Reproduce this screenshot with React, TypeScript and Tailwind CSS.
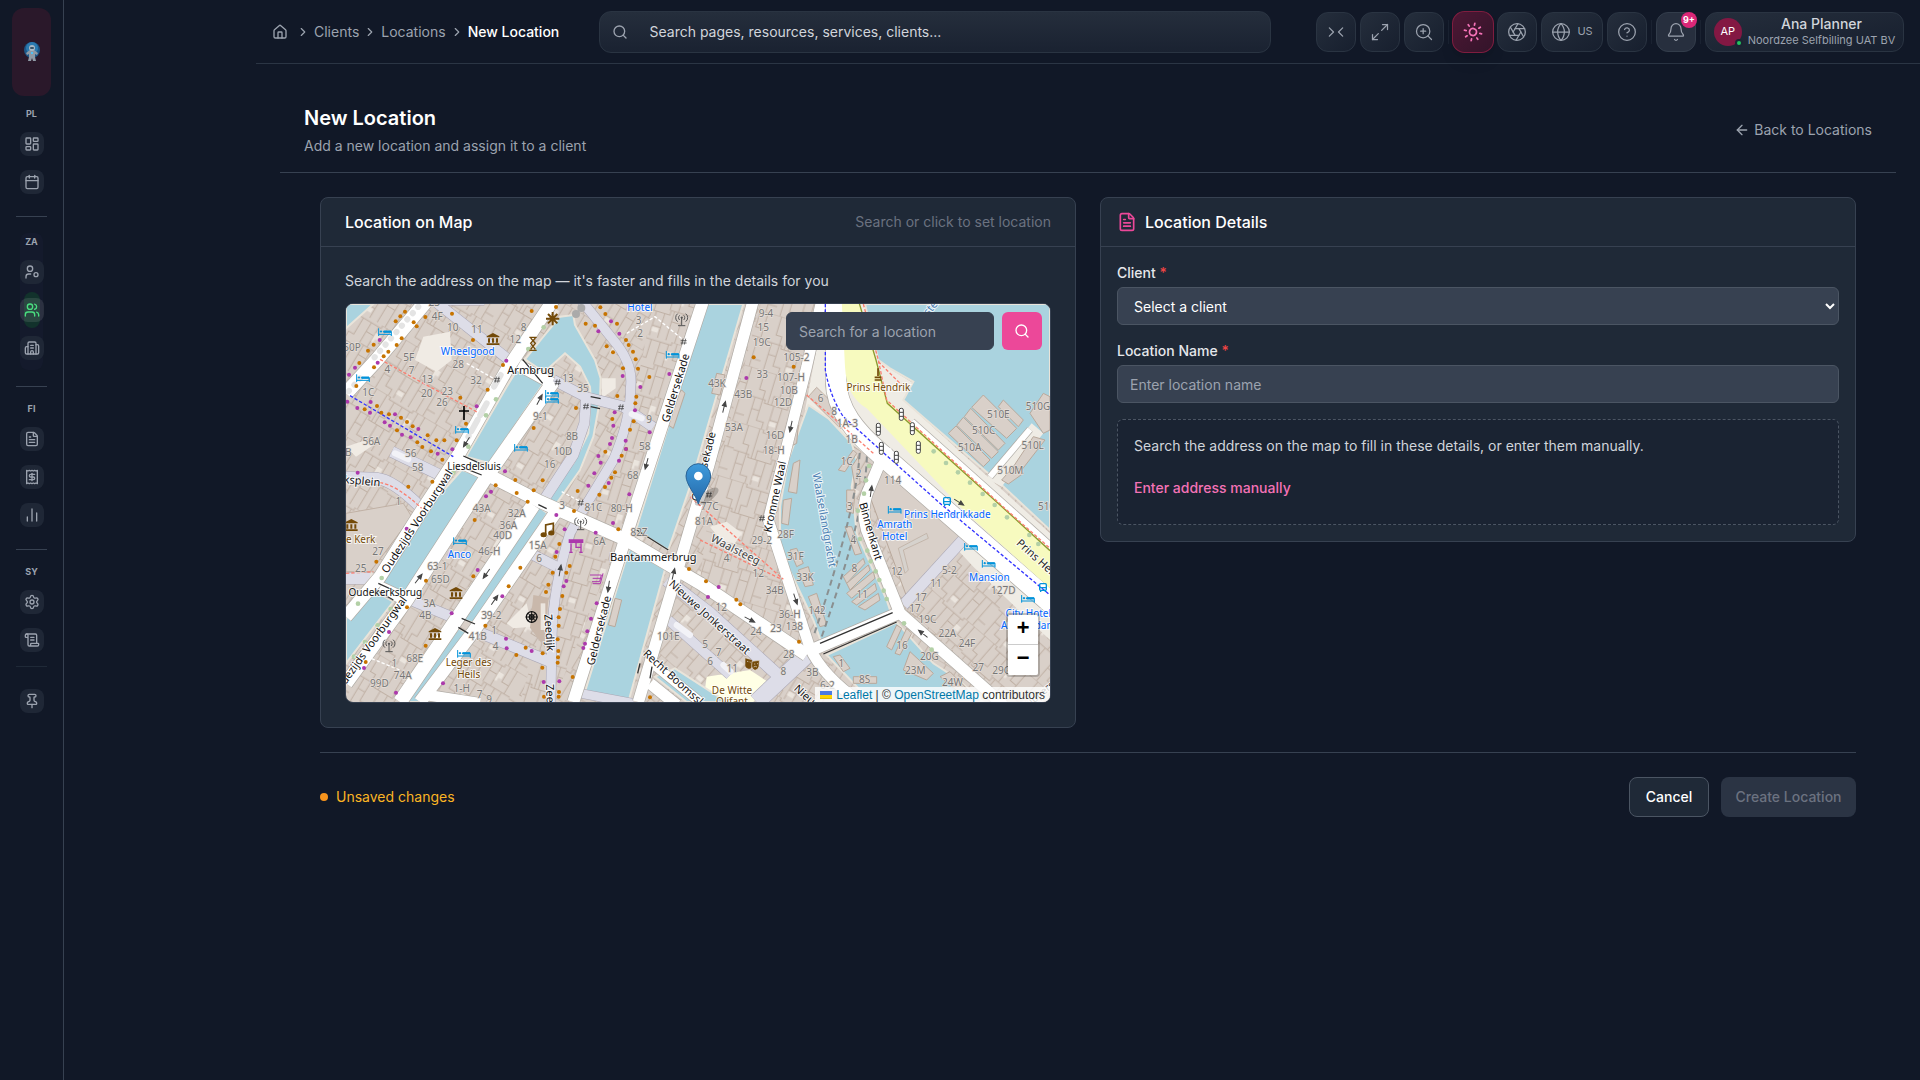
import React from 'react';
import {
  Aperture,
  ArrowLeft,
  Bell,
  Building2,
  Calendar,
  ChartNoAxesColumn,
  ChevronRight,
  ChevronsRightLeft,
  CircleQuestionMark,
  FileText,
  Globe,
  House,
  LayoutDashboard,
  Maximize2,
  Pin,
  ScrollText,
  Search,
  Settings,
  Sun,
  Users,
  ZoomIn,
} from 'lucide-react';

const UserDot = ({ size = 16 }: { size?: number }) => (
  <svg width={size} height={size} viewBox="0 0 24 24" fill="none" stroke="currentColor" strokeWidth="2" strokeLinecap="round" strokeLinejoin="round">
    <circle cx="9" cy="7" r="4" />
    <path d="M10 15H7a4 4 0 0 0-4 4v2" />
    <circle cx="18" cy="16" r="3" />
  </svg>
);

const ReceiptDollar = ({ size = 16 }: { size?: number }) => (
  <svg width={size} height={size} viewBox="0 0 24 24" fill="none" stroke="currentColor" strokeWidth="2" strokeLinecap="round" strokeLinejoin="round">
    <path d="M4 2v20l2-1 2 1 2-1 2 1 2-1 2 1 2-1 2 1V2l-2 1-2-1-2 1-2-1-2 1-2-1-2 1Z" />
    <path d="M16 8h-6a2 2 0 1 0 0 4h4a2 2 0 1 1 0 4H8" />
    <path d="M12 17.5v-11" />
  </svg>
);

const sections = [
  {
    label: 'PL',
    items: [
      { name: 'Dashboard', icon: LayoutDashboard },
      { name: 'Planning', icon: Calendar },
    ],
  },
  {
    label: 'ZA',
    current: true,
    items: [
      { name: 'Employees', icon: UserDot },
      { name: 'Clients', icon: Users, active: true },
      { name: 'Companies', icon: Building2 },
    ],
  },
  {
    label: 'FI',
    items: [
      { name: 'Invoices', icon: FileText },
      { name: 'Billing', icon: ReceiptDollar },
      { name: 'Reports', icon: ChartNoAxesColumn },
    ],
  },
  {
    label: 'SY',
    items: [
      { name: 'Settings', icon: Settings },
      { name: 'Logs', icon: ScrollText },
    ],
  },
];

const Astronaut = () => (
  <svg width="16" height="20" viewBox="0 0 16 20">
    <circle cx="8" cy="8" r="8" fill="#1c5788" />
    <circle cx="8" cy="6" r="6" fill="#2b7ab0" />
    <path d="M6 8 2 11l1 2 2-1v3l-1 4h3l1-3 1 3h3l-1-4v-3l2 1 1-2-4-3Z" fill="#8f9aa6" />
    <circle cx="8" cy="6" r="3" fill="#a9b8c4" />
    <rect x="6" y="5" width="4" height="2" rx="1" fill="#3a5568" />
    <rect x="7" y="10" width="2" height="2" fill="#4fc3f7" />
  </svg>
);

const NavItem = ({ name, icon: Icon, active }: any) => (
  <a href="#" aria-label={name} className={`flex h-9 items-center justify-center rounded-full ${active ? 'w-4 bg-[#12322c]' : 'w-6'}`}>
    <span className={`flex h-6 w-6 shrink-0 items-center justify-center rounded-lg ${active ? 'bg-white/10 text-[#4ade80]' : 'bg-[#1f2736] text-[#9ca3af]'}`}>
      <Icon size={16} />
    </span>
  </a>
);

const Sidebar = () => (
  <aside className="flex w-16 shrink-0 flex-col items-center border-r border-[#374151] pt-2">
    <a href="#" aria-label="Home" className="flex h-22 w-[39px] items-center justify-center rounded-xl bg-[#2a182a]">
      <Astronaut />
    </a>
    <nav className="mt-3 flex flex-col items-center">
      {sections.map((section, i) => (
        <React.Fragment key={section.label}>
          {i > 0 && <div className="my-4 h-px w-[31px] bg-[#374151]" />}
          <div className={`flex w-[23px] flex-col items-center gap-0.5 ${section.current ? 'rounded-lg bg-[#141a2c] pt-[3px] pb-1' : ''}`}>
            <span className="mb-1 text-[9px] leading-3 font-bold text-[#9ca3af]">{section.label}</span>
            {section.items.map((item) => (
              <NavItem key={item.name} {...item} />
            ))}
          </div>
        </React.Fragment>
      ))}
      <div className="mt-2 mb-4 h-px w-[31px] bg-[#1f2937]" />
      <NavItem name="Pin sidebar" icon={Pin} />
    </nav>
  </aside>
);

const tool =
  'relative flex h-10 items-center justify-center rounded-xl border border-[#2a3442] bg-linear-to-br from-[#252e3c] to-[#171f2e] text-[#9ca3af]';

const Separator = () => <div className="h-6 w-px bg-[#1a2231]" />;

const TopBar = () => (
  <header className="flex h-16 items-center justify-between border-b border-[#2b3544] px-4">
    <nav aria-label="Breadcrumb" className="flex w-[281px] items-center gap-1 text-sm whitespace-nowrap text-[#9ca3af]">
      <a href="#" aria-label="Home" className="mr-1"><House size={16} /></a>
      <ChevronRight size={14} className="shrink-0" />
      <a href="#">Clients</a>
      <ChevronRight size={14} className="shrink-0" />
      <a href="#">Locations</a>
      <ChevronRight size={14} className="shrink-0" />
      <span className="font-medium text-white">New Location</span>
    </nav>
    <label className="flex h-[42px] w-full max-w-2xl items-center rounded-xl border border-[#2a3442] bg-linear-to-b from-[#252e3c] to-[#1a2231] px-3">
      <Search size={16} className="text-[#9ca3af]" />
      <input
        type="text"
        aria-label="Search"
        placeholder="Search pages, resources, services, clients..."
        className="ml-[22px] flex-1 bg-transparent text-sm outline-none placeholder:text-[#d1d5db]"
      />
    </label>
    <div className="flex items-center gap-1">
      <button aria-label="Compact" className={`${tool} w-10`}><ChevronsRightLeft size={20} strokeWidth={1.5} /></button>
      <button aria-label="Fullscreen" className={`${tool} w-10`}><Maximize2 size={20} strokeWidth={1.5} /></button>
      <button aria-label="Zoom" className={`${tool} w-10`}><ZoomIn size={20} strokeWidth={1.5} /></button>
      <Separator />
      <button aria-label="Theme" className="flex h-10 w-10 scale-105 items-center justify-center rounded-xl border border-[#7f1d3f] bg-linear-to-br from-[#4e1734] to-[#33142a] text-[#f472b6] shadow-lg">
        <Sun size={20} strokeWidth={2} className="rotate-12" />
      </button>
      <button aria-label="Appearance" className={`${tool} w-10`}><Aperture size={20} strokeWidth={1.5} /></button>
      <button className={`${tool} w-[62px] gap-1.5 text-[11px]`}>
        <Globe size={20} strokeWidth={1.5} />
        <span>US</span>
      </button>
      <button aria-label="Help" className={`${tool} w-10`}><CircleQuestionMark size={20} strokeWidth={1.5} /></button>
      <Separator />
      <button aria-label="Notifications" className="relative flex h-10 w-10 items-center justify-center rounded-xl border border-[#333d4b] bg-[#272f3e] text-[#9ca3af]">
        <Bell size={20} strokeWidth={1.5} />
        <span className="absolute -top-px -right-0.5 flex h-4 w-4 items-center justify-center rounded-full bg-[#db2777] text-[9px] font-bold text-white">9+</span>
      </button>
      <Separator />
      <button className={`${tool} w-[199px] gap-1.5 whitespace-nowrap`}>
        <span className="relative flex h-7 w-7 items-center justify-center rounded-full bg-[#831843] text-[11px] text-white">
          AP
          <span className="absolute -right-px -bottom-px h-2 w-2 rounded-full border-2 border-[#1c2433] bg-[#22c55e]" />
        </span>
        <span className="flex flex-col">
          <span className="text-sm leading-4 font-medium text-[#d1d5db]">Ana Planner</span>
          <span className="text-[11px] leading-4">Noordzee Selfbilling UAT BV</span>
        </span>
      </button>
    </div>
  </header>
);

/* ---------- map ---------- */

const water = [
  '18,12 100,12 18,85',
  '548,182 612,248 448,490 378,470 500,260',
  '365,510 430,530 385,600 205,880 120,850 285,600',
  '108,875 160,905 18,1090 18,955',
  '555,178 610,110 660,50 700,45 705,75 765,180 782,235 780,300 760,410 720,510 650,610 610,600 640,560 700,490 745,400 752,290 750,260 720,200 675,160 620,210 595,205',
  '590,615 622,640 408,970 368,958',
  '355,985 385,1000 240,1206 195,1206',
  '1095,12 1210,12 1050,560 985,750 888,690 1000,330',
  '868,745 975,808 865,1206 735,1175',
  '1405,315 1465,355 1535,430 1550,480 1535,560 1540,600 1550,700 1640,900 1655,945 1445,1030 1420,960 1320,750 1320,620 1345,480',
  '1460,1065 1670,967 1780,1090 1850,1135 1930,1206 1610,1206 1560,1170',
  '1575,12 2130,12 2130,690 1985,555 1690,300 1720,245 1650,205 1615,180',
  '1005,1105 1160,1206 1040,1206 945,1130',
];

const blocks = [
  { fill: 'url(#hatch17)', points: '940,12 1090,12 870,640 640,1206 540,1206 630,900 720,620 860,400' },
  { fill: 'url(#hatch17)', points: '1260,12 1450,12 1290,620 1400,1040 1080,840 1110,600' },
  { fill: 'url(#hatch40)', points: '970,820 1400,1060 1240,1206 880,1206' },
  { fill: 'url(#hatch40)', points: '1590,560 1640,470 1960,640 2130,880 2130,1206 2000,1206 1680,900' },
];

const streets = [
  { d: 'M433 0 L280 0 L520 190', w: 30 },
  { d: 'M640 240 L740 292 L850 320 L940 382', w: 30 },
  { d: 'M738 300 L733 370 L700 465 L615 595', w: 30 },
  { d: 'M155 455 L310 530', w: 32 },
  { d: 'M18 532 L110 535 Q160 540 240 620', w: 34 },
  { d: 'M200 895 L345 955', w: 30 },
  { d: 'M400 990 L630 1085', w: 32 },
  { d: 'M580 765 L650 800', w: 30 },
  { d: 'M18 835 L90 835', w: 34 },
  { d: 'M980 840 L1110 940 L1330 1140', w: 36 },
  { d: 'M985 960 L1170 1125', w: 28 },
  { d: 'M1400 1065 L1250 1206', w: 50 },
  { d: 'M1900 685 L1690 915', w: 32 },
  { d: 'M720 1180 L880 1210', w: 26 },
  { d: 'M715 -10 L820 120 Q880 190 872 260 Q872 360 820 480 L735 620 L690 700 Q640 860 636 1000 L632 1206', w: 28 },
];

const roads = [
  { d: 'M270 -10 L110 180 L18 280', w: 42 },
  { d: 'M640 0 L500 210 L355 465 L240 640 L120 830 L18 950', w: 38 },
  { d: 'M640 245 L440 530 L200 900 L18 1150', w: 40 },
  { d: 'M580 615 L345 965 L180 1206', w: 42 },
  { d: 'M655 625 L400 995 L240 1206', w: 38 },
  { d: 'M260 1185 L420 1210', w: 32 },
  { d: 'M535 195 L635 250', w: 34 },
  { d: 'M120 862 L200 900', w: 36 },
  { d: 'M350 480 L445 525 L600 605 L860 720 L1080 850 L1400 1065', w: 38 },
  { d: 'M1090 0 L880 640 L700 1206', w: 36 },
  { d: 'M1240 0 L1105 500 L895 1206', w: 34 },
  { d: 'M930 1150 L1010 1215', w: 34 },
  { d: 'M930 1085 L1080 1206', w: 28 },
  { d: 'M1445 0 L1400 200 L1350 400 L1285 660 L1410 1045 Q1450 1130 1560 1206', w: 32 },
  { d: 'M1410 1052 L1670 942', w: 36 },
  { d: 'M1640 440 L1590 560 Q1560 620 1580 690 L1680 940 L1940 1170 L1990 1216', w: 34 },
  { d: 'M1488 0 L1488 240 C1488 330 1550 400 1620 460 L2140 915', w: 62 },
  { d: 'M1715 365 L2140 745', w: 20 },
  { d: 'M1950 530 L2070 388', w: 18 },
];

const boats = [
  '1350,380 1375,375 1370,430 1350,440', '1360,490 1380,480 1370,580 1345,575', '1330,600 1355,595 1345,675 1325,670',
  '1350,750 1370,745 1390,790 1370,800', '1375,810 1405,800 1420,855 1395,860', '1405,890 1430,880 1460,975 1440,980',
  '1495,510 1540,450 1550,460 1515,515', '1535,500 1555,470 1560,550 1545,560', '1520,570 1545,570 1540,640 1520,635',
  '1515,680 1535,680 1565,760 1545,765', '1510,830 1570,775 1575,790 1520,850', '1520,850 1585,795 1590,810 1530,870',
  '1520,880 1600,815 1605,835 1535,895', '1535,905 1605,850 1610,870 1550,915', '1555,920 1615,880 1620,900 1575,930',
  '1640,1040 1670,975 1685,985 1655,1050', '1665,1060 1700,985 1715,1000 1680,1065', '1690,1110 1710,1055 1780,1120 1760,1140',
  '1480,1070 1500,1065 1530,1105 1510,1115', '1540,1130 1610,1130 1610,1150 1540,1150', '1800,1130 1830,1115 1880,1165 1860,1180',
  '825,895 845,900 825,980 805,975', '1010,290 1025,270 1035,280 1000,385 985,375', '1130,220 1155,225 1140,285 1115,280',
  '1825,400 1848,378 1950,480 1930,500', '1850,376 1870,352 1975,455 1955,475', '1873,350 1892,325 1995,430 1975,450',
  '1895,322 1930,285 2030,385 2000,415', '1975,320 1990,300 2050,360 2035,380', '2070,340 2110,280 2130,290 2130,390 2110,400',
  '2020,500 2080,410 2115,420 2045,510', '1985,540 2020,500 2050,520 2005,552',
];

const dashes = [
  { d: 'M30 287 L340 470', c: '#3333ff' },
  { d: 'M120 178 L250 250 L415 338', c: '#fa8072' },
  { d: 'M120 548 Q170 555 245 625', c: '#fa8072' },
  { d: 'M18 820 L100 815', c: '#fa8072' },
  { d: 'M1050 590 L1330 838', c: '#fa8072' },
  { d: 'M1080 720 L1325 838', c: '#fa8072' },
  { d: 'M1400 285 L1470 345 L1600 460', c: '#fa8072' },
  { d: 'M1570 12 L1615 180 L1640 300 L2000 630 L2130 745', c: '#fa8072' },
  { d: 'M1615 185 L1690 260', c: '#fa8072' },
  { d: 'M1456 12 L1456 210 Q1470 290 1510 350 L1800 610 L2130 885', c: '#3333ff' },
  { d: 'M665 575 L740 615', c: '#ffffff' },
  { d: 'M380 190 L460 235', c: '#ffffff' },
  { d: 'M860 100 L945 50 L1030 120', c: '#ffffff' },
  { d: 'M80 1070 L180 1110', c: '#ffffff' },
];

const orange = [
  [195, 35], [181, 49], [167, 64], [256, 51], [221, 67], [230, 79], [336, 41], [185, 115], [170, 135], [101, 134], [84, 152], [145, 155], [131, 169], [58, 189], [102, 202], [49, 258],
  [399, 120], [489, 195], [575, 33], [648, 21], [737, 71], [765, 77], [781, 22], [796, 42], [831, 71], [858, 120], [866, 135], [879, 155], [800, 139], [819, 157], [887, 178], [849, 205], [894, 206], [928, 231],
  [443, 269], [361, 293], [378, 371], [350, 421], [708, 324], [832, 288], [889, 290], [886, 310], [817, 357], [881, 364], [870, 389], [858, 447], [845, 467], [796, 455], [825, 517], [814, 533], [795, 561], [778, 584], [713, 573],
  [74, 328], [111, 318], [124, 338], [147, 343], [183, 353], [201, 366], [218, 379], [263, 406], [289, 421], [313, 421], [171, 391], [232, 427], [247, 441], [273, 454], [307, 479], [277, 545], [205, 560],
  [581, 384], [608, 541], [526, 540], [467, 556], [581, 571], [530, 579], [563, 605], [702, 633], [835, 688], [404, 660], [541, 803], [506, 859], [436, 977], [400, 829], [258, 842], [201, 922], [109, 785], [257, 1037], [77, 1086],
  [658, 732], [646, 770], [689, 798], [638, 818], [679, 818], [625, 854], [618, 876], [667, 888], [660, 927], [656, 952], [656, 977], [653, 1018], [655, 1053], [654, 1072], [653, 1088], [608, 1060], [557, 1043], [529, 1065], [607, 1103], [698, 1131], [657, 1176], [656, 1190], [612, 1190], [930, 1192], [1047, 807],
  [1241, 172], [1361, 200], [1098, 844], [1189, 899], [1201, 913], [1377, 1025],
];

const purple = [
  [119, 120], [113, 188], [45, 203], [27, 224], [22, 305], [52, 324], [92, 306], [90, 338], [134, 367], [150, 377], [235, 387], [186, 404], [212, 412], [293, 461], [337, 448], [53, 518], [165, 343],
  [499, 182], [410, 319], [775, 94], [813, 64], [838, 101], [848, 228], [901, 261], [988, 222], [824, 337], [820, 377], [885, 331], [929, 397], [816, 414], [810, 432], [857, 422], [858, 447], [775, 468], [782, 488], [763, 520], [745, 557], [837, 482], [806, 549], [868, 583], [495, 514], [453, 575], [438, 589],
  [649, 645], [674, 688], [767, 698], [819, 669], [650, 756], [679, 843], [671, 859], [770, 910], [753, 956], [742, 994], [735, 1031], [730, 1044], [200, 686], [413, 810], [487, 889], [335, 940], [147, 996], [72, 1104], [168, 1178], [309, 1150], [498, 1016], [500, 1045], [575, 1053], [611, 1146], [658, 1144],
  [1219, 234], [1136, 861], [1104, 891],
];

const trees = [
  [468, 298], [438, 346], [385, 440], [340, 518], [611, 82], [565, 147], [125, 834], [54, 911], [152, 927], [113, 976], [75, 1026], [42, 1070],
  [1587, 498], [1578, 541], [1572, 581], [1554, 632], [1560, 717], [1582, 752], [1592, 784], [1607, 814], [1618, 840], [1631, 872], [1640, 897], [1692, 970], [1775, 1049],
  [1781, 454], [1818, 489], [1854, 517], [1890, 548], [1928, 582], [1964, 615], [2001, 652], [2068, 705], [2095, 732],
];

const numbers: [number, number, string][] = [
  [283, 18, '23'], [292, 60, '4F'], [338, 94, '10'], [411, 98, '11'], [551, 92, '8'], [526, 128, '12'], [36, 152, '50P'], [206, 182, '5F'], [142, 220, '4'], [215, 222, '7'], [355, 204, '28'], [262, 250, '13'], [408, 252, '32'],
  [85, 288, '1C'], [260, 292, '20'], [322, 286, '23'], [306, 319, '26'], [684, 246, '13'], [729, 275, '35'], [601, 360, '9-1'], [927, 370, '9'], [696, 420, '8B'], [669, 466, '10D'], [629, 503, '16'], [914, 449, '58'], [878, 538, '68'],
  [94, 436, '56A'], [25, 468, 'B'], [212, 470, '56'], [233, 512, '58'], [175, 615, '1'], [425, 636, '43A'], [530, 652, '32A'], [505, 686, '36A'], [488, 718, '40D'], [448, 764, '46-H'], [666, 626, '3'], [760, 634, '81C'], [845, 636, '80-H'], [897, 708, '82Z'], [778, 735, '6A'],
  [593, 746, '15A'], [597, 787, '6'], [114, 766, '27'], [62, 815, '25'], [292, 811, '63-1'], [301, 848, '65D'], [268, 922, '3A'], [256, 957, '4B'], [454, 957, '39-2'], [462, 1001, '1'], [413, 1021, '41B'], [467, 1051, '4'], [224, 1086, '68E'], [163, 1101, '1'], [188, 1138, '74A'], [118, 1161, '99D'], [365, 1175, '1-H'], [419, 1195, '7'], [447, 1208, '9'],
  [896, 71, '3'], [900, 110, '2'], [985, 1020, '101E'],
  [1278, 50, '9-4'], [1270, 92, '15'], [1265, 137, '19C'], [1369, 182, '105-2'], [1267, 235, '33'], [1353, 243, '107-H'], [1131, 262, '43K'], [1210, 293, '43B'], [1346, 281, '10B'], [1329, 317, '12D'], [1182, 392, '53A'], [1305, 416, '16D'], [1301, 462, '18-H'],
  [1442, 305, '6'], [1482, 344, '8'], [1522, 382, '1A-3'], [1535, 430, '1B'], [1520, 495, '1C'], [1556, 530, '2'], [1658, 553, '114'], [1529, 630, '3'], [1540, 732, '4'], [1975, 354, '510E'], [1931, 402, '510C'], [1889, 452, '510A'], [2094, 330, '510G'], [2078, 448, '510L'], [2011, 522, '510M'], [2120, 630, '510'],
  [1109, 630, '77C'], [1092, 676, '81A'], [1265, 733, '29-2'], [1337, 715, '28F'], [1160, 787, '4'], [1255, 831, '12'], [1366, 781, '31F'], [1395, 843, '33K'], [1304, 881, '34B'], [1431, 941, '142'], [1144, 932, '12'], [1349, 955, '36-H'], [1248, 1004, '24'], [1308, 997, '23'], [1363, 989, '138'], [1346, 1075, '28'], [1330, 1124, '8'], [1417, 1129, '3B'], [1095, 1044, '5'], [1136, 1069, '7'], [1110, 1094, '6'], [1177, 1117, '11'], [1462, 1166, '6-2'], [1504, 1100, '1'], [1574, 1148, '8S'],
  [1543, 815, '8'], [1567, 895, '11'], [1670, 825, '12'], [1828, 821, '5-2'], [1788, 862, '11'], [1743, 903, '17'], [1725, 935, '17'], [1762, 970, '19C'], [1822, 1010, '22A'], [1881, 1042, '24F'], [1686, 1046, '16'], [1768, 1080, '20G'], [1726, 1123, '23M'], [1837, 1159, '24W'], [1915, 1114, '27'], [1985, 1122, '29G'], [1990, 881, '127D'],
];

const names: [number, number, number, string, string, number][] = [
  // x, y, rotation, text, colour, size
  [572, 223, 0, 'Armbrug', '#111', 33],
  [402, 510, 0, 'Liesdelsluis', '#111', 30],
  [136, 888, 0, 'Oudekerksbrug', '#111', 30],
  [940, 783, 0, 'Bantammerbrug', '#111', 33],
  [66, 544, 5, 'ksplein', '#111', 33],
  [232, 665, -57, 'Oudezijds Voorburgwal', '#111', 33],
  [88, 1040, -54, 'Oudezijds Voorburgwal', '#111', 33],
  [1008, 264, -73, 'Geldersekade', '#111', 33],
  [778, 992, -76, 'Geldersekade', '#111', 33],
  [1092, 500, -76, 'Geldersekade', '#111', 33],
  [627, 998, 86, 'Zeedijk', '#111', 33],
  [630, 1208, 88, 'Zeedijk', '#111', 33],
  [1306, 590, -78, 'Kromme Waal', '#111', 33],
  [1591, 694, 74, 'Binnenkant', '#111', 33],
  [1186, 750, 27, 'Waalsteeg', '#444', 33],
  [1108, 952, 42, 'Nieuwe Jonkerstraat', '#222', 33],
  [1018, 1150, 42, 'Recht Boomssloot', '#111', 33],
  [1410, 1200, 42, 'Nieuwe', '#111', 33],
  [2140, 820, 42, 'Prins Hendrikkade', '#222', 33],
  [1452, 660, 80, 'Waalseilandgracht', '#4d80b3', 33],
  [1780, 15, -50, 'Oosterdok', '#4d80b3', 33],
  [2120, 1165, -40, 'Schippersgracht', '#222', 30],
  [383, 164, 0, 'Wheelgood', '#0066ff', 30],
  [900, 32, 0, 'Hotel', '#0066ff', 30],
  [358, 774, 0, 'Anco', '#0066ff', 30],
  [1664, 684, 0, 'Amrath', '#0066ff', 30],
  [1664, 720, 0, 'Hotel', '#0066ff', 30],
  [1822, 655, 0, 'Prins Hendrikkade', '#0066ff', 30],
  [1948, 844, 0, 'Mansion', '#0066ff', 30],
  [2065, 950, 0, 'City Hotel', '#0066ff', 30],
  [2065, 986, 0, 'Amsterdam', '#0066ff', 30],
  [1615, 274, 0, 'Prins Hendrik', '#734a08', 30],
  [386, 1097, 0, 'Leger des', '#734a08', 30],
  [386, 1133, 0, 'Heils', '#734a08', 30],
  [62, 729, 0, 'e Kerk', '#734a08', 30],
  [1176, 1182, 0, 'De Witte', '#734a08', 30],
  [1176, 1215, 0, 'Olifant', '#734a08', 30],
];

const beds = [[135, 97], [69, 235], [366, 390], [543, 444], [636, 282], [636, 300], [998, 165], [360, 724], [372, 1062], [1664, 630], [1893, 741], [1946, 792], [2064, 897]];
const museums = [[459, 118], [34, 676], [348, 880], [285, 1003]];
const lights = [[1684, 343], [1717, 386], [1735, 442], [1615, 388], [1624, 445], [1669, 472]];
const arrows = [[598, 300, -62], [380, 425, 122], [920, 490, 105], [235, 837, -52], [440, 820, 125], [463, 901, -55], [660, 813, -80], [806, 858, 98], [1000, 823, -77], [1152, 322, -76], [1353, 378, 102], [1593, 575, -82], [1366, 896, 72], [1228, 958, 28], [1750, 1002, 218], [1856, 606, 32]];
const gates = [[471, 239], [653, 247], [738, 319], [843, 322], [1031, 125], [722, 608], [1107, 584], [1266, 655]];
const masts = [[1025, 60], [722, 672], [147, 1038]];

const MapCanvas = () => (
  <svg viewBox="18 12 2112 1194" preserveAspectRatio="xMidYMid slice" className="block h-full w-full" style={{ fontFamily: '"Noto Sans", sans-serif' }}>
    <defs>
      {[
        ['hatch35', 31],
        ['hatch17', 17],
        ['hatch40', 41],
      ].map(([id, angle]) => (
        <pattern key={id} id={String(id)} width="210" height="170" patternUnits="userSpaceOnUse" patternTransform={`rotate(${angle})`}>
          <rect width="210" height="170" fill="#d9d0c9" />
          <path
            d="M0 0H70V10H150V0H210 M0 84H48V94H120V80H210 M22 0V58H40V84 M58 0V94 M88 10V66H70V94 M116 10V80 M116 40H142 M142 10V80 M166 0V52H190V80 M190 0V52 M16 84V170 M16 120H40 M40 84V150H62V170 M78 94V170 M104 94V138H78 M104 138V170 M130 80V170 M130 112H158 M158 80V170 M182 80V146H210 M182 146V170"
            fill="none"
            stroke="#c0b1a5"
            strokeWidth="3"
          />
          <path d="M143 30h18v16h-10v12h-8z M79 142h20v14h-20z" fill="#ebe5de" />
        </pattern>
      ))}
      <linearGradient id="pin" x1="0" x2="0" y1="0" y2="1">
        <stop offset="0" stopColor="#3f9bdc" />
        <stop offset="1" stopColor="#2468a8" />
      </linearGradient>
    </defs>
    <rect width="2160" height="1230" fill="url(#hatch35)" />
    {blocks.map((b) => <polygon key={b.points} points={b.points} fill={b.fill} />)}

    {/* yards and quays */}
    <path d="M250 110 330 95 335 180 290 215 225 180z M500 970l60-60 15 70-55 5z M1110 680l50-15 45 35-20 30-40-5z M18 440l60-20 30 10-60 40z M785 235h42v30l-42 30z" fill="#f0ebe4" />
    <path d="M18 640 190 610 215 650 110 790 90 815H18z" fill="#d9d0c9" stroke="#c0b1a5" strokeWidth="3" />
    <path d="M580 885l45 8-10 150-45-60z" fill="#c9b8ab" />
    <path d="M602 910h14v80h-14z" fill="#ebe5de" />
    <path d="M1395 330 1455 12H1580L1640 200 1720 250 1690 300 2130 700V1020L1900 800 1640 520 1500 400z" fill="#efece5" />
    <path d="M1405 290 1430 262 1530 360 1500 385z" fill="#d9d0c9" stroke="#c0b1a5" strokeWidth="3" />
    <path d="M1590 590 1640 480 1880 700 1700 890z" fill="#d9d0c9" stroke="#b9a99c" strokeWidth="3" />
    <path d="M1765 715 1690 750 1705 810 1695 820 1675 745 1760 700z" fill="#d6d2cd" stroke="#b9a99c" strokeWidth="2" />
    <path d="M1100 1130 1230 1110 1290 1150 1240 1206H1090z" fill="#ffffe5" />

    {water.map((p) => <polygon key={p} points={p} fill="#aad3df" stroke="#e9e4da" strokeWidth="6" />)}
    <path d="M1940 535 2075 370 2110 400 1985 560z" fill="#efece5" />
    {boats.map((p) => <polygon key={p} points={p} fill="#d9d0c9" stroke="#b9a99c" strokeWidth="3" strokeLinejoin="round" />)}
    <path d="M1560 430 Q1560 600 1420 1010 M1580 440 Q1590 600 1445 1010" fill="none" stroke="#8a8f90" strokeWidth="6" strokeDasharray="18 12" />

    <g fill="none" strokeLinejoin="round">
      {streets.map((s) => <path key={s.d} d={s.d} stroke="#a9a6b4" strokeWidth={s.w + 3} />)}
      {streets.map((s) => <path key={s.d} d={s.d} stroke="#dddde8" strokeWidth={s.w} />)}
      {roads.map((r) => <path key={r.d} d={r.d} stroke="#b0aca6" strokeWidth={r.w + 4} />)}
      {roads.map((r) => <path key={r.d} d={r.d} stroke="#ffffff" strokeWidth={r.w} />)}
    </g>
    <path d="M1505 0H1555L1608 180 1642 300 1980 615 2130 750V865L1880 640 1580 325 Q1520 290 1515 200z" fill="#f7fabf" />
    <path d="M1555 0 1608 180 1642 310 1980 615 2130 752" fill="none" stroke="#8d9a2e" strokeWidth="4" />
    <path d="M548 178 608 250 M370 468 420 490 M375 505 425 525 M115 850 165 873 M108 870 160 900 M365 955 405 972 M355 982 385 1000 M890 690 985 750 M595 614 620 626 M900 1090 893 1120 M936 1100 930 1135 M1440 1030 1658 938 M1450 1062 1670 966 M752 290 782 296 M752 320 780 326" stroke="#333" strokeWidth="4" fill="none" />
    <path d="M235 20 95 182 M60 235 25 275" stroke="#e4e4e4" strokeWidth="18" strokeDasharray="1 24" strokeLinecap="round" />
    <path d="M482 225 462 260 M440 310 385 410" stroke="#e4e4e4" strokeWidth="18" strokeDasharray="40 16" strokeLinecap="round" />
    <path d="M165 460 205 478 M875 342 905 355 M1010 975 1050 1005 M1150 1095 1172 1115" stroke="#f2f2f7" strokeWidth="18" strokeLinecap="round" />

    {dashes.map((l) => <path key={l.d} d={l.d} fill="none" stroke={l.c} strokeWidth="4" strokeDasharray="10 6" />)}
    {trees.map(([x, y]) => <circle key={`${x}-${y}`} cx={x} cy={y} r="7" fill="#b3d0a6" />)}
    <circle cx="708" cy="42" r="12" fill="#aaa" />
    <circle cx="724" cy="24" r="12" fill="#aaa" />
    {orange.map(([x, y], i) => <circle key={i} cx={x} cy={y} r="6" fill="#c77400" />)}
    {purple.map(([x, y], i) => <circle key={i} cx={x} cy={y} r="6" fill="#ac39ac" />)}

    {arrows.map(([x, y, a], i) => (
      <path key={i} transform={`translate(${x} ${y}) rotate(${a})`} d="M-16 0H8 M18 0 4-6V6z" stroke="#444" strokeWidth="3" fill="#444" />
    ))}
    {gates.map(([x, y], i) => (
      <path key={i} transform={`translate(${x} ${y})`} d="M-9-3H9 M-9 4H9 M-6 9-2-9 M2 9 6-9" stroke="#333" strokeWidth="2" />
    ))}
    {lights.map(([x, y], i) => (
      <g key={i} transform={`translate(${x} ${y})`} fill="#fff" stroke="#444" strokeWidth="3">
        <rect x="-6" y="-18" width="12" height="36" rx="5" />
        <path d="M-6-6H6 M-6 6H6" />
      </g>
    ))}
    {masts.map(([x, y], i) => (
      <g key={i} transform={`translate(${x} ${y})`} fill="none" stroke="#555" strokeWidth="3">
        <path d="M0-8V16 M-11 17H11 M-6-14a9 9 0 0 0 0 14 M6-14a9 9 0 0 1 0 14 M-12-19a15 15 0 0 0 0 24 M12-19a15 15 0 0 1 0 24" />
        <circle cy="-7" r="2" fill="#555" />
      </g>
    ))}

    {numbers.map(([x, y, t], i) => (
      <text key={i} x={x} y={y} fontSize="30" textAnchor="middle" fill="#777" stroke="#e6dfd9" strokeWidth="4" paintOrder="stroke">{t}</text>
    ))}
    {names.map(([x, y, a, t, c, s], i) => (
      <text key={i} transform={`translate(${x} ${y}) rotate(${a})`} dy={a ? 10 : 0} fontSize={s} textAnchor="middle" fill={c} stroke="#ffffff" strokeOpacity="0.75" strokeWidth="6" paintOrder="stroke">{t}</text>
    ))}

    {beds.map(([x, y], i) => (
      <path key={i} transform={`translate(${x} ${y})`} d="M-19-12V11 M-19 6H19 M19-2V11 M-10-4h-4v3h4z M-4-4H18V0H-4z" stroke="#0092da" strokeWidth="3" fill="#0092da" />
    ))}
    {museums.map(([x, y], i) => (
      <path key={i} transform={`translate(${x} ${y})`} d="M-19-9 0-19 19-9V-6H-19z M-15-3h6V10h-6z M-3-3H3V10h-6z M9-3h6V10H9z M-19 12H19V17H-19z" fill="#734a08" />
    ))}
    <g stroke="#734a08" strokeWidth="5" fill="none">
      <path d="M638 36V76 M618 56H658 M624 42 652 70 M652 42 624 70" strokeWidth="6" />
      <path d="M568 112H590 M568 151H590 M572 114 586 130 572 148 M586 114 572 130 586 148" strokeWidth="4" />
      <path d="M617 703V675L640 670V698" />
      <path d="M1614 205V228 M1604 232H1624 M1604 240H1624" />
      <ellipse cx="611" cy="704" rx="7" ry="5" fill="#734a08" />
      <ellipse cx="634" cy="699" rx="7" ry="5" fill="#734a08" />
    </g>
    <path d="M372 318V360 M357 333H387" stroke="#000" strokeWidth="5" />
    <g fill="none" stroke="#111" strokeWidth="4">
      <circle cx="575" cy="951" r="16" />
      <circle cx="575" cy="951" r="7" />
      <path d="M557 951H593 M575 933V969 M563 939 587 963 M587 939 563 963" strokeWidth="3" />
    </g>
    <g fill="none" stroke="#ac39ac" strokeWidth="4">
      <path d="M688 720H728V727H688z" fill="#ac39ac" />
      <path d="M693 730V757 M723 730V757 M708 728V742H723 M688 757H698 M718 757H728" />
      <path d="M750 825H784L779 845H756 M789 820 781 851H758 M758 835H784" strokeWidth="3" />
    </g>
    <g fill="#734a08">
      <path d="M1216 1075l20 6v16c0 8-8 12-14 8-6-3-7-8-6-14z" />
      <path d="M1236 1084l22-3-1 18c-2 8-8 13-14 11-6-3-8-8-8-14z" stroke="#e6dfd9" strokeWidth="2" />
      <path d="M1221 1084l4 1M1229 1086l3 1M1242 1092h4M1251 1091h3M1241 1101q5-4 10 0" stroke="#e6dfd9" strokeWidth="2" fill="none" />
    </g>
    {[[1821, 605], [2109, 863]].map(([x, y]) => (
      <g key={x} transform={`translate(${x} ${y})`} fill="none" stroke="#0092da" strokeWidth="4">
        <rect x="-10" y="-12" width="20" height="20" rx="3" />
        <path d="M-10 0H10 M-7 8V13 M7 8V13" />
      </g>
    ))}

    {/* marker */}
    <ellipse cx="1100" cy="590" rx="42" ry="16" transform="rotate(-35 1100 590)" fill="#000" opacity="0.2" />
    <path d="M1075 612c-6-26-37-58-37-84a37 37 0 0 1 74 0c0 26-31 58-37 84z" fill="url(#pin)" stroke="#2a6396" strokeWidth="3" />
    <circle cx="1075" cy="528" r="13" fill="#fff" />
  </svg>
);

const LocationMap = () => (
  <div className="relative mt-3 h-[400px] overflow-hidden rounded-lg border border-[#374151]">
    <MapCanvas />
    <div className="absolute top-2 right-2 flex gap-2">
      <input
        type="text"
        aria-label="Search for a location"
        placeholder="Search for a location"
        className="h-[38px] w-52 rounded-md border border-[#374151] bg-[#374151] px-3 text-sm outline-none placeholder:text-[#9ca3af]"
      />
      <button aria-label="Search" className="flex h-[38px] w-10 items-center justify-center rounded-md bg-[#ec4899] text-white">
        <Search size={16} />
      </button>
    </div>
    <div className="absolute right-2.5 bottom-[25px] flex flex-col rounded-sm border-2 border-black/20 bg-clip-padding font-['Liberation_Mono',monospace] text-[22px] leading-[30px] font-bold text-black">
      <button aria-label="Zoom in" className="h-[30px] w-[30px] rounded-t-xs border-b border-[#ccc] bg-white">+</button>
      <button aria-label="Zoom out" className="h-[30px] w-[30px] rounded-b-xs bg-white">−</button>
    </div>
    <div className="absolute right-0 bottom-0 flex h-[15px] items-center bg-white/80 px-[5px] font-['Liberation_Sans',sans-serif] text-xs whitespace-pre text-[#333]">
      <svg width="12" height="8" viewBox="0 0 12 8" className="mr-1">
        <path fill="#4C7BE1" d="M0 0h12v4H0z" />
        <path fill="#FFD500" d="M0 4h12v3H0z" />
        <path fill="#E0BC00" d="M0 7h12v1H0z" />
      </svg>
      <a href="#" className="text-[#0078a8]">Leaflet</a> | © <a href="#" className="text-[#0078a8]">OpenStreetMap</a> contributors
    </div>
  </div>
);

const Required = () => <span className="text-[#ef4444]">*</span>;

export default function App() {
  return (
    <div className="flex min-h-screen bg-[#111827] font-[Inter,sans-serif] text-white">
      <Sidebar />
      <div className="ml-48 min-w-0 flex-1">
        <TopBar />
        <main className="p-6">
          <div className="flex items-center justify-between border-b border-[#374151] px-6 py-4">
            <div>
              <h1 className="text-xl leading-7 font-semibold">New Location</h1>
              <p className="mt-1 text-sm text-[#9ca3af]">Add a new location and assign it to a client</p>
            </div>
            <a href="#" className="flex items-center gap-1 text-sm text-[#9ca3af]">
              <ArrowLeft size={16} />
              Back to Locations
            </a>
          </div>

          <form className="mx-auto mt-6 max-w-[1536px]">
            <div className="grid grid-cols-2 items-start gap-6">
              <section className="rounded-lg border border-[#374151] bg-[#1f2937]">
                <div className="flex items-center justify-between border-b border-[#374151] px-6 py-3">
                  <h2 className="text-base font-medium">Location on Map</h2>
                  <span className="text-sm text-[#6b7280]">Search or click to set location</span>
                </div>
                <div className="p-6">
                  <p className="text-sm text-[#d1d5db]">Search the address on the map — it's faster and fills in the details for you</p>
                  <LocationMap />
                </div>
              </section>

              <section className="rounded-lg border border-[#374151] bg-[#1f2937]">
                <div className="flex items-center gap-2 border-b border-[#374151] px-4 py-3">
                  <FileText size={20} className="text-[#ec4899]" />
                  <h2 className="text-base font-medium">Location Details</h2>
                </div>
                <div className="p-4">
                  <label htmlFor="client" className="block text-sm font-medium text-[#e5e7eb]">Client <Required /></label>
                  <select id="client" className="mt-1 h-[38px] w-full rounded-md border border-[#4b5563] bg-[#374151] px-3 text-sm text-white">
                    <option>Select a client</option>
                  </select>
                  <label htmlFor="name" className="mt-4 block text-sm font-medium text-[#e5e7eb]">Location Name <Required /></label>
                  <input
                    id="name"
                    type="text"
                    placeholder="Enter location name"
                    className="mt-1 h-[38px] w-full rounded-md border border-[#4b5563] bg-[#374151] px-3 text-sm outline-none placeholder:text-[#9ca3af]"
                  />
                  <div className="mt-4 rounded-md border border-dashed border-[#4b5563] bg-[#1a2332] p-4">
                    <p className="text-sm text-[#d1d5db]">Search the address on the map to fill in these details, or enter them manually.</p>
                    <button type="button" className="mt-3 h-10 text-sm font-medium text-[#f472b6]">Enter address manually</button>
                  </div>
                </div>
              </section>
            </div>

            <div className="mt-6 flex items-center justify-between border-t border-[#374151] pt-6">
              <div className="flex items-center gap-2 text-sm text-[#fbb524]">
                <span className="h-2 w-2 rounded-full bg-[#f7941d]" />
                Unsaved changes
              </div>
              <div className="flex gap-3">
                <button type="button" className="h-10 w-20 rounded-lg border border-[#4b5563] bg-[#1f2937] text-sm font-medium">Cancel</button>
                <button type="submit" disabled className="h-10 w-[135px] rounded-lg bg-[#2b3444] text-sm font-medium text-[#6b7280]">Create Location</button>
              </div>
            </div>
          </form>
        </main>
      </div>
    </div>
  );
}
